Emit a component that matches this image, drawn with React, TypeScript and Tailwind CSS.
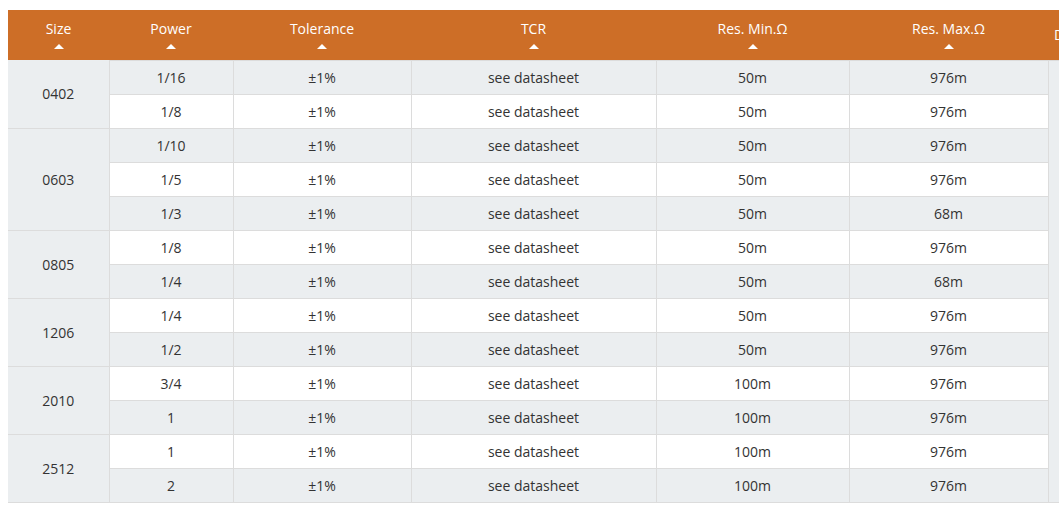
const groups = [
  { size: "0402", rows: [["1/16", "50m", "976m"], ["1/8", "50m", "976m"]] },
  { size: "0603", rows: [["1/10", "50m", "976m"], ["1/5", "50m", "976m"], ["1/3", "50m", "68m"]] },
  { size: "0805", rows: [["1/8", "50m", "976m"], ["1/4", "50m", "68m"]] },
  { size: "1206", rows: [["1/4", "50m", "976m"], ["1/2", "50m", "976m"]] },
  { size: "2010", rows: [["3/4", "100m", "976m"], ["1", "100m", "976m"]] },
  { size: "2512", rows: [["1", "100m", "976m"], ["2", "100m", "976m"]] },
];

const headers = ["Size", "Power", "Tolerance", "TCR", "Res. Min.Ω", "Res. Max.Ω"];

function Arrow() {
  return <div className="mx-auto mt-[5px] h-0 w-0 border-x-[5px] border-b-[5px] border-x-transparent border-b-white" />;
}

export default function App() {
  const total = groups.reduce((n, g) => n + g.rows.length, 0);
  let idx = 0;

  return (
    <div className="w-[1059px] h-[507px] overflow-hidden bg-white pt-[10px] pl-[8px] font-['Open_Sans',sans-serif] text-[14px] text-[#333]">
      <table className="table-fixed border-collapse w-[1141px]">
        <colgroup>
          <col className="w-[101px]" />
          <col className="w-[124px]" />
          <col className="w-[178px]" />
          <col className="w-[245px]" />
          <col className="w-[193px]" />
          <col className="w-[199px]" />
          <col className="w-[101px]" />
        </colgroup>
        <thead>
          <tr className="h-[50px] bg-[#cd6e27] text-white">
            {headers.map((h) => (
              <th key={h} className="align-top pt-[9px] font-normal leading-[20px]">
                {h}
                <Arrow />
              </th>
            ))}
            <th className="text-left pl-[6px] font-normal align-middle">Datasheet</th>
          </tr>
        </thead>
        <tbody>
          {groups.map((g) =>
            g.rows.map((r, i) => {
              const odd = idx % 2 === 0;
              const first = idx === 0;
              idx++;
              const bg = odd ? "bg-[#ebeef0]" : "bg-white";
              return (
                <tr key={g.size + i} className="h-[34px]">
                  {i === 0 && (
                    <td rowSpan={g.rows.length} className="bg-[#ebeef0] text-center border-b border-r border-[#dcdcdc]">
                      {g.size}
                    </td>
                  )}
                  <td className={`${bg} text-center border border-[#dcdcdc]`}>{r[0]}</td>
                  <td className={`${bg} text-center border border-[#dcdcdc]`}>±1%</td>
                  <td className={`${bg} text-center border border-[#dcdcdc]`}>see datasheet</td>
                  <td className={`${bg} text-center border border-[#dcdcdc]`}>{r[1]}</td>
                  <td className={`${bg} text-center border border-[#dcdcdc]`}>{r[2]}</td>
                  {first && (
                    <td rowSpan={total} className="bg-[#ebeef0] border border-[#dcdcdc]" />
                  )}
                </tr>
              );
            })
          )}
        </tbody>
      </table>
    </div>
  );
}
